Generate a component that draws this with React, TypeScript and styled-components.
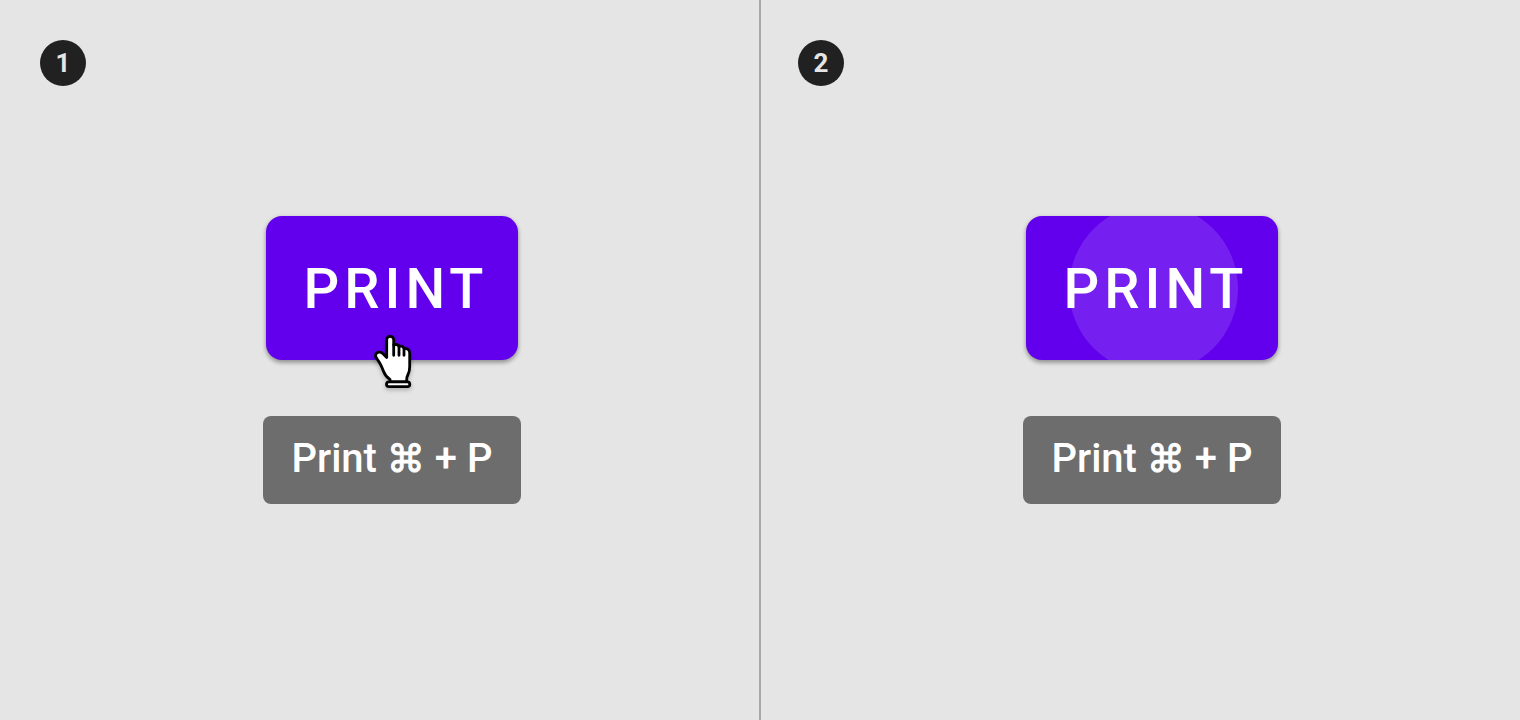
import React from "react";
import styled, { createGlobalStyle } from "styled-components";

const GlobalStyle = createGlobalStyle`
  *, *::before, *::after { box-sizing: border-box; }
  body {
    margin: 0;
    background: #e5e5e5;
    font-family: Roboto, "Liberation Sans", sans-serif;
    font-weight: 500;
  }
`;

const Board = styled.main`
  display: grid;
  grid-template-columns: 1fr 2px 1fr;
  min-height: 100vh;
`;

const Divider = styled.div`
  background: #a7a7ac;
`;

const Panel = styled.section<{ $start: number; $end: number }>`
  padding: 40px ${(p) => p.$end}px 40px ${(p) => p.$start}px;
`;

const Badge = styled.div`
  display: flex;
  align-items: center;
  justify-content: center;
  width: 46px;
  height: 46px;
  border-radius: 50%;
  background: #212121;
  color: #e5e5e5;
  font-size: 26px;
  font-weight: 700;
  line-height: 32px;
`;

const Demo = styled.div`
  display: flex;
  flex-direction: column;
  align-items: center;
  gap: 56px;
  margin-top: 130px;
`;

const ButtonWrap = styled.div`
  position: relative;
`;

const PrintButton = styled.button`
  position: relative;
  display: block;
  overflow: hidden;
  min-width: 252px;
  height: 144px;
  padding: 2px 29px 0 37px;
  border: 0;
  border-radius: 16px;
  background: #6200ee;
  box-shadow: 0 3px 4px rgba(0, 0, 0, 0.28), 0 1px 5px rgba(0, 0, 0, 0.14);
  color: #fff;
  font: inherit;
  font-size: 56px;
  line-height: 64px;
  letter-spacing: 5px;
  cursor: pointer;
`;

const Ripple = styled.span`
  position: absolute;
  top: -12px;
  left: 43px;
  width: 169px;
  height: 169px;
  border-radius: 50%;
  background: rgba(255, 255, 255, 0.12);
`;

const Label = styled.span`
  position: relative;
`;

const Pointer = styled.svg`
  position: absolute;
  top: 118px;
  left: 108px;
  width: 38px;
  height: 56px;
  overflow: visible;
  pointer-events: none;
  filter: drop-shadow(0 2px 2px rgba(0, 0, 0, 0.25));
`;

const Tooltip = styled.div`
  height: 88px;
  padding: 19px 28px 21px;
  border-radius: 8px;
  background: #6d6d6d;
  color: #fff;
  font-size: 40px;
  line-height: 48px;
  white-space: nowrap;
`;

const KeySymbol = styled.span`
  font-family: "DejaVu Sans", sans-serif;
  font-size: 38px;
  -webkit-text-stroke: 1px currentColor;
`;

function HandPointer() {
  return (
    <Pointer viewBox="0 0 38 56" aria-hidden="true">
      <g fill="#fff" stroke="#000" strokeWidth="2.8" strokeLinecap="round" strokeLinejoin="round">
        <path d="M12.7 23.5V5.8a3.5 3.5 0 0 1 7 0v5c2.6-.6 4.700 0 5.300 1.600 2.300-.5 4.300.3 5 1.900 3.200-.2 5.700 1.400 5.700 4.700v13.500c0 3.500-.4 5.500-1.700 8-1 1.900-1.300 3.200-1.300 5.500v2H16v-2.600c-3.200-2-5.200-4.700-6.400-7.900C8.300 34 6.500 29.200 3.300 25.300 1.200 22.800 1.200 20.700 2.500 19.300c1.700-1.700 4.500-1.300 6.500.5z" />
        <path d="M19.7 10.800V21.300M25 12.500V21.300M30 14.500V21.300" fill="none" />
        <rect x="12.5" y="47.8" width="23.3" height="4.800" rx="2.400" />
      </g>
    </Pointer>
  );
}

type StepProps = { number: number; start: number; end: number; pressed?: boolean };

function Step({ number, start, end, pressed }: StepProps) {
  return (
    <Panel $start={start} $end={end}>
      <Badge>{number}</Badge>
      <Demo>
        <ButtonWrap>
          <PrintButton type="button" aria-describedby={`tip-${number}`}>
            {pressed && <Ripple />}
            <Label>PRINT</Label>
          </PrintButton>
          {!pressed && <HandPointer />}
        </ButtonWrap>
        <Tooltip role="tooltip" id={`tip-${number}`}>
          Print <KeySymbol>⌘</KeySymbol> + P
        </Tooltip>
      </Demo>
    </Panel>
  );
}

export default function App() {
  return (
    <>
      <GlobalStyle />
      <Board>
        <Step number={1} start={40} end={15} />
        <Divider />
        <Step number={2} start={37} end={14} pressed />
      </Board>
    </>
  );
}
